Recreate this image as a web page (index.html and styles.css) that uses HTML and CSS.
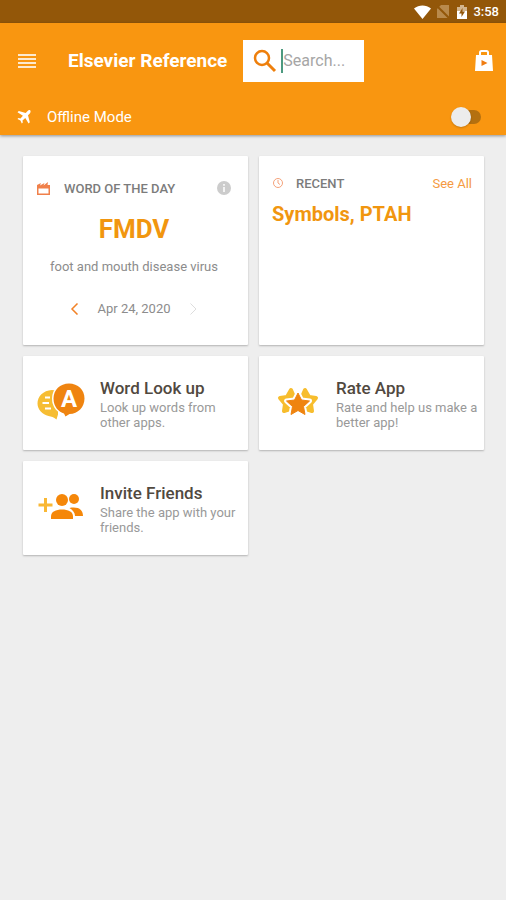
FILE: index.html
```html
<!DOCTYPE html>
<html lang="en">
<head>
<meta charset="utf-8">
<meta name="viewport" content="width=device-width, initial-scale=1">
<title>Elsevier Reference</title>
<link rel="stylesheet" href="styles.css">
</head>
<body>
<div class="status-bar">
  <svg width="17" height="14" viewBox="0 0 17 14" aria-hidden="true"><path d="M0 3.500C5-.5 12-.5 17 3.500L8.500 14z" fill="#fff"/></svg>
  <svg class="status-sim" width="12" height="13" viewBox="0 0 12 13" aria-hidden="true"><path d="M4 0h8v13H0V4z" fill="#b98a4c"/><path d="M0 1l12 12" stroke="#935709" stroke-width="2"/></svg>
  <svg class="status-battery" width="10" height="14" viewBox="0 0 10 14" aria-hidden="true"><path d="M3 0h4v2h3v5H0V2h3z" fill="#d3b58d"/><path d="M0 6h10v8H0z" fill="#fff"/><path d="M5.500 3L2 8.500h2.500V12L8 6.500H5.500z" fill="#935709"/></svg>
  <span class="status-time">3:58</span>
</div>
<header class="app-bar">
  <div class="toolbar">
    <button class="icon-button menu-button" type="button" aria-label="Menu">
      <svg width="18" height="14" viewBox="0 0 18 14"><path d="M0 1h18M0 5h18M0 9h18M0 13h18" stroke="#fff" stroke-width="2" opacity=".8"/></svg>
    </button>
    <h1 class="app-title">Elsevier Reference</h1>
    <form class="search" role="search">
      <label for="search" class="search-icon" aria-label="Search">
        <svg width="24" height="24" viewBox="0 0 24 24"><circle cx="9" cy="9" r="7" fill="none" stroke="#ee7f0c" stroke-width="2.500"/><path d="M14 14l8 8" stroke="#ee7f0c" stroke-width="3"/></svg>
      </label>
      <input id="search" class="search-input" type="text" placeholder="Search...">
    </form>
    <button class="icon-button store-button" type="button" aria-label="Store">
      <svg width="20" height="22" viewBox="0 0 20 22"><path d="M6 6V2.500Q6 1 7.500 1h5Q14 1 14 2.500V6" fill="none" stroke="#fff" stroke-width="2"/><path d="M2 5h16l1 16H1z" fill="#fff"/><path d="M7.500 10v6l6-3z" fill="#f07c10"/></svg>
    </button>
  </div>
  <div class="offline">
    <svg width="14" height="14" viewBox="0 0 14 14" aria-hidden="true"><path d="M13.200.3c-.8-.5-1.800-.2-2.600.6L8.700 2.900 1.800 1 .5 2.200l5.400 3.500-2.400 2.700-2.100-.3L.5 9l2.900 1.500L4.800 13.500l1-.9-.3-2.200 2.800-2.400 3.300 5.500 1.200-1.300-1.800-6.900 1.800-1.900c.8-.8 1.100-2 .4-3.100z" fill="#fff"/></svg>
    <label class="offline-label" for="offline">Offline Mode</label>
    <input id="offline" class="switch" type="checkbox" role="switch">
  </div>
</header>
<main class="cards">
  <section class="card word-card">
    <div class="card-head">
      <svg width="13" height="13" viewBox="0 0 13 13" aria-hidden="true"><path d="M0 3L4 1 3 3.500 7.500 1 6.500 3.500 11 0l-.5 3H13v10H0z" fill="#f0804a"/><path d="M1.500 6.500h10v5h-10z" fill="#fff"/></svg>
      <h2 class="card-label">WORD OF THE DAY</h2>
      <button class="icon-button" type="button" aria-label="About">
        <svg width="14" height="14" viewBox="0 0 14 14"><circle cx="7" cy="7" r="7" fill="#ccc"/><path d="M7 6v5M7 3v1.800" stroke="#fff" stroke-width="1.500"/></svg>
      </button>
    </div>
    <p class="word">FMDV</p>
    <p class="definition">foot and mouth disease virus</p>
    <div class="date-nav">
      <button class="icon-button" type="button" aria-label="Previous day"><svg width="9" height="12" viewBox="0 0 9 12"><path d="M7.500.5L2 6l5.500 5.500" fill="none" stroke="#f28227" stroke-width="1.500"/></svg></button>
      <span>Apr 24, 2020</span>
      <button class="icon-button" type="button" aria-label="Next day"><svg width="9" height="12" viewBox="0 0 9 12"><path d="M1.500.5L7 6l-5.500 5.500" fill="none" stroke="#ddd" stroke-width="1"/></svg></button>
    </div>
  </section>
  <section class="card recent-card">
    <div class="card-head">
      <svg width="12" height="12" viewBox="0 0 12 12" aria-hidden="true"><circle cx="6" cy="6" r="4.500" fill="none" stroke="#f5a27a"/><path d="M6 3v3l2 1.500" fill="none" stroke="#f5a27a"/></svg>
      <h2 class="card-label">RECENT</h2>
      <a class="see-all" href="#recent">See All</a>
    </div>
    <p class="recent-word">Symbols, PTAH</p>
  </section>
  <a class="card action" href="#lookup">
    <svg width="50" height="40" viewBox="0 0 50 40" aria-hidden="true"><path d="M16 7C7 7.500 1.500 13.500 1.500 20.500c0 6 5 11 11 12.500 3 .8 5 1 8 3.500l1.500-5V8z" fill="#f6bd33"/><path d="M9 14.500h5M6.500 20h6.500M9 25.500h6" stroke="#fff" stroke-width="2"/><path d="M33 .5C24 .5 17.500 7 17.500 15.500S23 29 28 30.500l1.500 3 4-2.500C42 31 48.500 24 48.500 15.500S42 .5 33 .5z" fill="#ef8410" stroke="#fff" stroke-width="3" paint-order="stroke"/><text class="bubble-letter" x="33" y="24" text-anchor="middle">A</text></svg>
    <span class="action-text"><strong>Word Look up</strong><small>Look up words from other apps.</small></span>
  </a>
  <a class="card action" href="#rate">
    <svg width="50" height="40" viewBox="0 0 50 40" aria-hidden="true"><g fill="#f7bd2d" stroke="#f7bd2d" stroke-width="4" stroke-linejoin="round"><path d="M19 7l3 7 3 7-7 5-6 2 1-7-5-6 7-1z"/><path d="M33 7l-3 7-3 7 7 5 6 2-1-7 5-6-7-1z"/></g><path d="M26 10l3.500 7 8 1-6 5.500 1.500 8-7-4-7 4 1.500-8-6-5.500 8-1z" fill="#fff" stroke="#fff" stroke-width="5" stroke-linejoin="round"/><path d="M26 10l3.500 7 8 1-6 5.500 1.500 8-7-4-7 4 1.500-8-6-5.500 8-1z" fill="#ef8410" stroke="#ef8410" stroke-linejoin="round"/></svg>
    <span class="action-text"><strong>Rate App</strong><small>Rate and help us make a better app!</small></span>
  </a>
  <a class="card action" href="#invite">
    <svg width="50" height="40" viewBox="0 0 50 40" aria-hidden="true"><path d="M9.500 10v14M2.500 17h14" stroke="#f9b835" stroke-width="3"/><circle cx="38" cy="11" r="5" fill="#f58709"/><path d="M33.500 20c8-1.500 13.500 1 13.500 8h-8c0-3.500-2.500-6-5.500-8z" fill="#f58709"/><circle cx="26" cy="12" r="6" fill="#f58709"/><path d="M15 31v-2.500c0-5 5-7 11-7s11 2 11 7V31z" fill="#f58709"/></svg>
    <span class="action-text"><strong>Invite Friends</strong><small>Share the app with your friends.</small></span>
  </a>
</main>
</body>
</html>
```

FILE: styles.css
```css
* {
  box-sizing: border-box;
}

body {
  margin: 0;
  min-height: 100vh;
  background: #eee;
  font-family: Roboto, "Liberation Sans", sans-serif;
  color: #8c8c8c;
}

h1, h2, p {
  margin: 0;
}

svg {
  display: block;
  flex: none;
}

.icon-button {
  padding: 0;
  border: 0;
  background: none;
}

.status-bar {
  display: flex;
  align-items: center;
  justify-content: flex-end;
  height: 23px;
  padding: 0 7px;
  background: #935709;
}

.status-sim {
  margin-left: 6px;
}

.status-battery {
  margin-left: 8px;
}

.status-time {
  margin-left: 6px;
  font-size: 13px;
  font-weight: 500;
  line-height: 24px;
  color: #fff;
}

.app-bar {
  background: #f99610;
  color: #fff;
  box-shadow: 0 1px 3px rgba(0, 0, 0, 0.4);
}

.toolbar {
  display: flex;
  align-items: center;
  height: 75px;
  padding: 0 12px 0 18px;
}

.app-title {
  margin-left: 32px;
  font-size: 19px;
  font-weight: 700;
  line-height: 24px;
  white-space: nowrap;
}

.search {
  display: flex;
  align-items: center;
  width: 121px;
  height: 42px;
  margin-left: 16px;
  padding-left: 10px;
  background: #fff;
}

.search-input {
  flex: 1;
  min-width: 0;
  height: 24px;
  margin-left: 4px;
  padding: 0;
  border: 0;
  border-left: 2px solid #4d9a80;
  outline: 0;
  background: none;
  font: 16px/24px Roboto, "Liberation Sans", sans-serif;
  color: #555;
}

.search-input::placeholder {
  color: #a6a6a6;
  opacity: 1;
}

.store-button {
  margin-left: auto;
}

.offline {
  display: flex;
  align-items: center;
  height: 37px;
  padding: 0 25px 0 17px;
}

.offline-label {
  margin-left: 16px;
  font-size: 15px;
}

.switch {
  position: relative;
  appearance: none;
  width: 27px;
  height: 14px;
  margin: 0 0 0 auto;
  border-radius: 7px;
  background: linear-gradient(to right, transparent 8px, #b4700f 8px);
}

.switch::before {
  content: "";
  position: absolute;
  top: -3px;
  left: -3px;
  width: 20px;
  height: 20px;
  border-radius: 50%;
  background: #ececec;
  box-shadow: 0 1px 2px rgba(0, 0, 0, 0.2);
}

.switch:checked::before {
  left: 10px;
}

.cards {
  display: grid;
  grid-template-columns: 1fr 1fr;
  gap: 11px;
  padding: 21px 22px 21px 23px;
}

.card {
  border-radius: 1px;
  background: #fff;
  box-shadow: 0 1px 2px rgba(0, 0, 0, 0.25);
}

.word-card {
  min-height: 189px;
  padding: 22px 17px 0 14px;
  text-align: center;
}

.recent-card {
  padding: 17px 12px 0 13px;
}

.card-head {
  display: flex;
  align-items: center;
  height: 20px;
}

.card-label {
  margin-right: auto;
  margin-left: 14px;
  font-size: 13px;
  font-weight: 500;
  color: #7c7c7c;
}

.recent-card .card-label {
  margin-left: 12px;
}

.see-all {
  font-size: 13px;
  color: #f59a42;
  text-decoration: none;
}

.word {
  margin-top: 15px;
  font-size: 26px;
  font-weight: 700;
  line-height: 32px;
  color: #f1960f;
}

.definition {
  margin-top: 14px;
  font-size: 13px;
  line-height: 16px;
}

.date-nav {
  display: flex;
  align-items: center;
  justify-content: center;
  gap: 18px;
  margin-top: 26px;
  font-size: 13px;
  line-height: 16px;
}

.recent-word {
  margin-top: 9px;
  font-size: 20px;
  font-weight: 700;
  line-height: 24px;
  color: #f1960f;
}

.action {
  display: flex;
  align-items: center;
  min-height: 94px;
  padding: 0 4px 0 13px;
  color: #999;
  text-decoration: none;
}

.action-text {
  margin-left: 14px;
}

.action strong,
.action small {
  display: block;
}

.action strong {
  font-size: 17px;
  font-weight: 500;
  line-height: 24px;
  color: #51493f;
}

.action small {
  font-size: 13px;
  line-height: 15px;
}

.bubble-letter {
  font-size: 24px;
  font-weight: 700;
  fill: #fff;
}
```
